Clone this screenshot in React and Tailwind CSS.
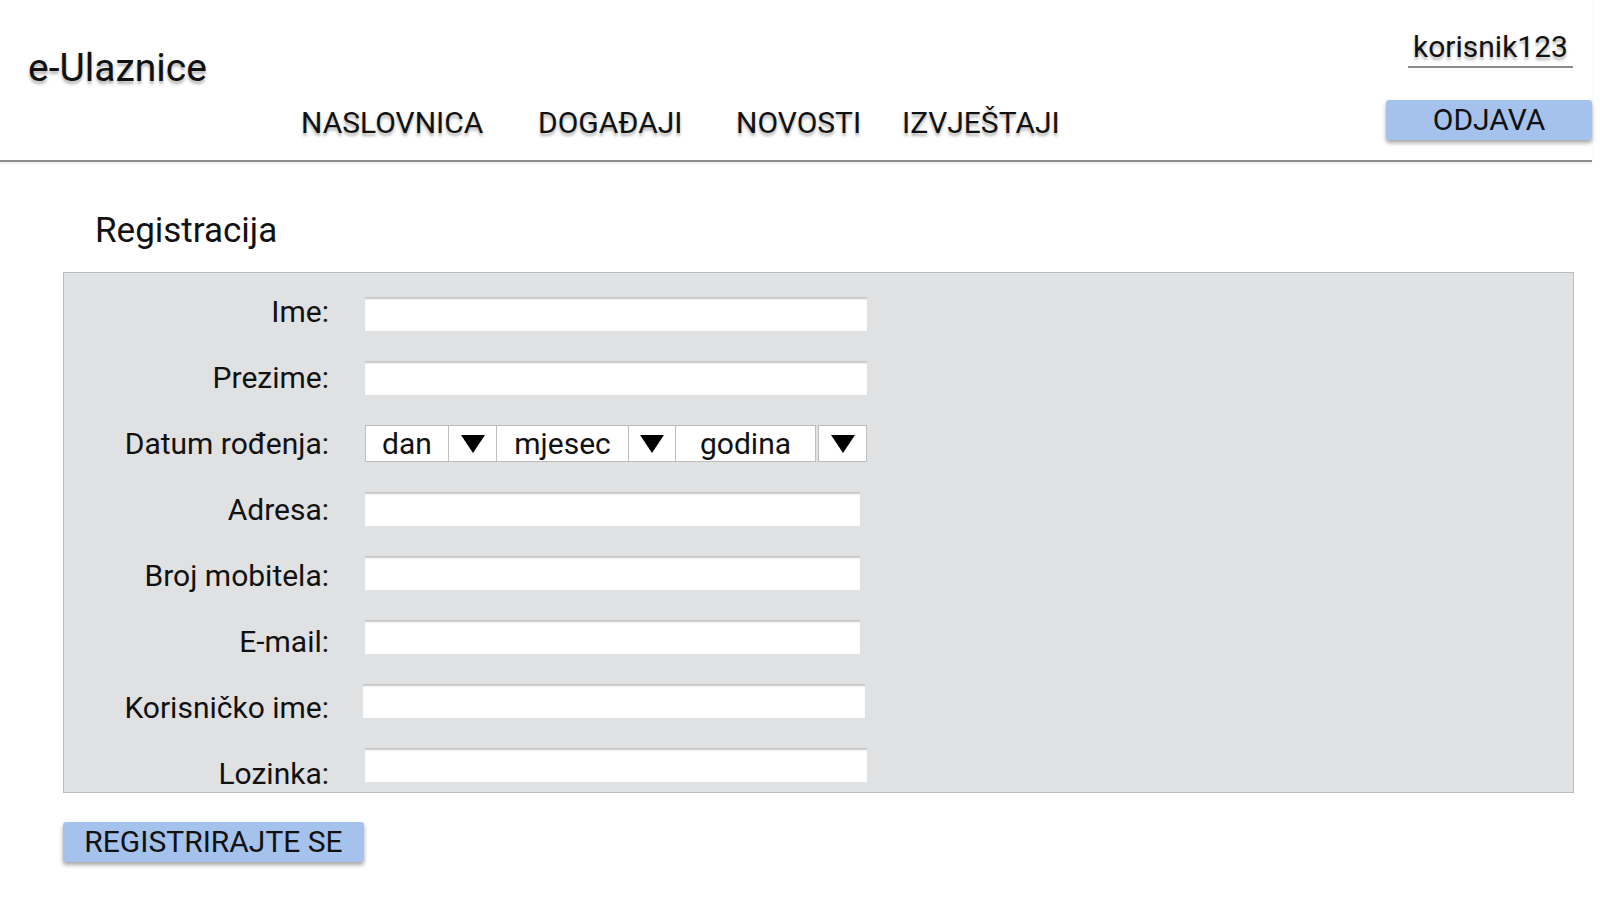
const Arrow = () => (
  <svg width="26" height="20" viewBox="0 0 26 20">
    <path d="M1 1h24L13 19z" fill="#000" />
  </svg>
);

const TextField = ({ width = 'w-[502px]', shift = '' }) => (
  <div className={`h-[34px] bg-white shadow-[inset_0_3px_2px_-1px_#c4c4c4] ${width} ${shift}`} />
);

const DateSelect = () => (
  <div className="flex h-[37px] text-[30px] leading-[34px]">
    <div className="flex w-[84px] items-center justify-center border border-[#bdbdbd] bg-white">dan</div>
    <div className="flex w-[48px] items-center justify-center border border-l-0 border-[#bdbdbd] bg-white"><Arrow /></div>
    <div className="flex w-[132px] items-center justify-center border border-l-0 border-[#bdbdbd] bg-white">mjesec</div>
    <div className="flex w-[47px] items-center justify-center border border-l-0 border-[#bdbdbd] bg-white"><Arrow /></div>
    <div className="flex w-[140px] items-center justify-center border border-l-0 border-[#bdbdbd] bg-white">godina</div>
    <div className="ml-[2px] flex w-[49px] items-center justify-center border border-[#bdbdbd] bg-white"><Arrow /></div>
  </div>
);

const labels = ['Ime:', 'Prezime:', 'Datum rođenja:', 'Adresa:', 'Broj mobitela:', 'E-mail:', 'Korisničko ime:', 'Lozinka:'];

export default function App() {
  return (
    <div className="min-h-[900px] bg-white text-[#111] font-['Roboto','Liberation_Sans',sans-serif]">
      <header className="flex h-[162px] w-[1592px] border-b-2 border-[#8c8c8c] shadow-[0_2px_2px_rgba(0,0,0,0.06)]">
        <div className="flex flex-col pl-[28px]">
          <div className="mt-[46px] text-[39px] leading-[44px] [text-shadow:0_3px_3px_rgba(0,0,0,0.3)]">e-Ulaznice</div>
          <nav className="mt-[16px] flex pl-[273px] text-[30px] leading-[34px] [text-shadow:0_3px_3px_rgba(0,0,0,0.3)]">
            <a className="w-[237px]">NASLOVNICA</a>
            <a className="w-[198px]">DOGAĐAJI</a>
            <a className="w-[166px]">NOVOSTI</a>
            <a>IZVJEŠTAJI</a>
          </nav>
        </div>
        <div className="ml-auto flex w-[206px] flex-col">
          <div className="ml-[22px] mt-[30px] w-[165px] border-b-2 border-[#8c8c8c] pb-[2px] text-center text-[30px] leading-[34px] [text-shadow:0_3px_3px_rgba(0,0,0,0.3)]">
            korisnik123
          </div>
          <button className="mt-[32px] h-[40px] w-[206px] rounded-[3px] bg-[#a4c2ec] text-[30px] leading-[34px] shadow-[0_3px_4px_rgba(0,0,0,0.35)]">
            ODJAVA
          </button>
        </div>
      </header>

      <main className="pl-[63px]">
        <h1 className="ml-[32px] mt-[49px] text-[35px] leading-[40px]">Registracija</h1>
        <div className="mt-[21px] flex h-[521px] w-[1511px] border border-[#bcbcbc] bg-[#e0e1e3]">
          <div className="w-[265px] pt-[5px] text-right text-[30px]">
            {labels.map((l) => (
              <div key={l} className="flex h-[66px] items-center justify-end">{l}</div>
            ))}
          </div>
          <div className="ml-[36px] flex flex-col gap-[30px] pt-[24px]">
            <TextField />
            <TextField />
            <DateSelect />
            <TextField width="w-[495px]" />
            <TextField width="w-[495px]" />
            <TextField width="w-[495px]" />
            <TextField shift="-ml-[2px]" />
            <TextField />
          </div>
        </div>
        <button className="mt-[29px] h-[40px] w-[301px] rounded-[3px] bg-[#a4c2ec] text-[30px] leading-[34px] shadow-[0_3px_4px_rgba(0,0,0,0.35)]">
          REGISTRIRAJTE SE
        </button>
      </main>
    </div>
  );
}
